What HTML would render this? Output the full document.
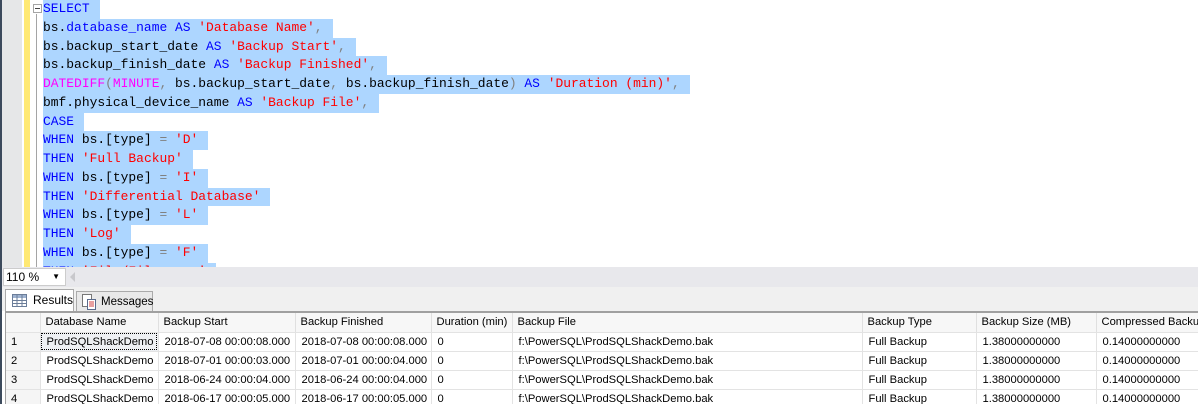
<!DOCTYPE html>
<html><head><style>
*{margin:0;padding:0;box-sizing:border-box}
body{width:1198px;height:404px;overflow:hidden;background:#fff;position:relative;font-family:"Liberation Sans",sans-serif}
#ed{position:absolute;left:0;top:0;width:1198px;height:267px;overflow:hidden;background:#fff}
.lb{position:absolute;left:0;top:0;width:2px;height:404px;background:#3c4a5c}
.gut{position:absolute;left:2px;top:0;width:20px;height:267px;background:#e6e7e8}
.yel{position:absolute;left:24px;top:0;width:6px;height:267px;background:#ffe974}
.vl{position:absolute;left:36px;top:14px;width:1px;height:253px;background:#a5a5a5}
.box{position:absolute;left:33px;top:4px;width:9px;height:9px;border:1px solid #a5a5a5;background:#fff}
.box:after{content:"";position:absolute;left:1px;top:3px;width:5px;height:1px;background:#444}
.ln{position:absolute;left:43px;height:18.75px;line-height:18.75px;font-family:"Liberation Mono",monospace;font-size:12.95px;white-space:pre;color:#000;background:#add6ff;padding-right:10px}
.k{color:#0000ff}.s{color:#ff0000}.f{color:#ff00ff}.g{color:#808080}
#zb{position:absolute;left:2px;top:267px;width:1196px;height:20px;background:#e8e8ec}
#zsel{position:absolute;left:3px;top:268px;width:63px;height:18px;background:#fff;border:1px solid #ccc;font-size:12px;line-height:16px;padding-left:2px}
#tabs{position:absolute;left:2px;top:287px;width:1196px;height:24px;background:#f0f0f0}
.tab{position:absolute;font-size:12px;border:1px solid #aaa;border-bottom:none}
#grid{position:absolute;left:5px;top:311px;width:1193px;height:93px;border-top:2px solid #a0a0a0;border-left:1px solid #a0a0a0;background:#fff;overflow:hidden}
table{border-collapse:collapse;font-size:11.2px;table-layout:fixed;width:1200px}
td{height:19px;border-right:1px solid #e3e3e3;border-bottom:1px solid #e3e3e3;padding:0 0 0 6px;white-space:nowrap;overflow:hidden;line-height:18px}
tr.h td{background:#f7f7f7;border-right:1px solid #e0e0e0;padding-left:5px}
td.n{background:#f5f5f5;padding-left:5px}
td.sel{background:#eef0f3;outline:1px dotted #000;outline-offset:-2px}
</style></head><body>
<div id="ed">
<div class="gut"></div><div class="yel"></div><div class="vl"></div>
<div class="ln" style="top:0px"><span class="k">SELECT</span></div>
<div class="ln" style="top:18.75px">bs.<span class="k">database_name</span> <span class="k">AS</span> <span class="s">'Database Name'</span><span class="g">,</span></div>
<div class="ln" style="top:37.5px">bs.backup_start_date <span class="k">AS</span> <span class="s">'Backup Start'</span><span class="g">,</span></div>
<div class="ln" style="top:56.25px">bs.backup_finish_date <span class="k">AS</span> <span class="s">'Backup Finished'</span><span class="g">,</span></div>
<div class="ln" style="top:75px"><span class="f">DATEDIFF</span><span class="g">(</span><span class="f">MINUTE</span><span class="g">,</span> bs.backup_start_date<span class="g">,</span> bs.backup_finish_date<span class="g">)</span> <span class="k">AS</span> <span class="s">'Duration (min)'</span><span class="g">,</span></div>
<div class="ln" style="top:93.75px">bmf.physical_device_name <span class="k">AS</span> <span class="s">'Backup File'</span><span class="g">,</span></div>
<div class="ln" style="top:112.5px"><span class="k">CASE</span></div>
<div class="ln" style="top:131.25px"><span class="k">WHEN</span> bs.[type] <span class="g">=</span> <span class="s">'D'</span></div>
<div class="ln" style="top:150px"><span class="k">THEN</span> <span class="s">'Full Backup'</span></div>
<div class="ln" style="top:168.75px"><span class="k">WHEN</span> bs.[type] <span class="g">=</span> <span class="s">'I'</span></div>
<div class="ln" style="top:187.5px"><span class="k">THEN</span> <span class="s">'Differential Database'</span></div>
<div class="ln" style="top:206.25px"><span class="k">WHEN</span> bs.[type] <span class="g">=</span> <span class="s">'L'</span></div>
<div class="ln" style="top:225px"><span class="k">THEN</span> <span class="s">'Log'</span></div>
<div class="ln" style="top:243.75px"><span class="k">WHEN</span> bs.[type] <span class="g">=</span> <span class="s">'F'</span></div>
<div class="ln" style="top:262.5px"><span class="k">THEN</span> <span class="s">'File/Filegroup'</span></div>
<div class="box"></div>
</div>
<div id="zb"></div>
<div id="zsel">110 %<span style="position:absolute;right:5px;top:0;font-size:8px">▼</span></div>
<div style="position:absolute;left:70px;top:272px;width:0;height:0;border:5px solid transparent;border-right-color:#c8c8cc;border-left:none"></div>
<div id="tabs"></div>
<div class="tab" style="left:5px;top:289px;width:69px;height:23px;background:#fff;line-height:20px;padding-left:27px">Results
<svg style="position:absolute;left:6px;top:4px" width="15" height="13"><rect x="0.5" y="0.5" width="14" height="12" fill="#fff" stroke="#6b7d99"/><rect x="1" y="1" width="13" height="3" fill="#9fb3d0"/><path d="M5 1v11M10 1v11M1 6.5h13M1 9.5h13" stroke="#6b7d99"/></svg></div>
<div class="tab" style="left:76px;top:291px;width:77px;height:20px;background:#e9e9e9;line-height:20px;padding-left:24px;font-size:11.5px">Messages
<svg style="position:absolute;left:4px;top:1px" width="16" height="17"><rect x="1.5" y="1.5" width="9" height="12" fill="#fff" stroke="#777"/><rect x="6.5" y="6.5" width="8" height="10" fill="#fff" stroke="#5a6b8c"/><path d="M8 9h5M8 11h5M8 13h5" stroke="#d04040"/></svg></div>
<div class="lb"></div>
<div id="grid">
<table>
<colgroup><col style="width:34px"><col style="width:118px"><col style="width:137px"><col style="width:136px"><col style="width:81px"><col style="width:350px"><col style="width:114px"><col style="width:120px"><col style="width:110px"></colgroup>
<tr class="h"><td></td><td>Database Name</td><td>Backup Start</td><td>Backup Finished</td><td>Duration (min)</td><td>Backup File</td><td>Backup Type</td><td>Backup Size (MB)</td><td>Compressed Backup</td></tr>
<tr><td class="n">1</td><td class="sel">ProdSQLShackDemo</td><td>2018-07-08 00:00:08.000</td><td>2018-07-08 00:00:08.000</td><td>0</td><td>f:\PowerSQL\ProdSQLShackDemo.bak</td><td>Full Backup</td><td>1.38000000000</td><td>0.14000000000</td></tr>
<tr><td class="n">2</td><td>ProdSQLShackDemo</td><td>2018-07-01 00:00:03.000</td><td>2018-07-01 00:00:04.000</td><td>0</td><td>f:\PowerSQL\ProdSQLShackDemo.bak</td><td>Full Backup</td><td>1.38000000000</td><td>0.14000000000</td></tr>
<tr><td class="n">3</td><td>ProdSQLShackDemo</td><td>2018-06-24 00:00:04.000</td><td>2018-06-24 00:00:04.000</td><td>0</td><td>f:\PowerSQL\ProdSQLShackDemo.bak</td><td>Full Backup</td><td>1.38000000000</td><td>0.14000000000</td></tr>
<tr><td class="n">4</td><td>ProdSQLShackDemo</td><td>2018-06-17 00:00:05.000</td><td>2018-06-17 00:00:05.000</td><td>0</td><td>f:\PowerSQL\ProdSQLShackDemo.bak</td><td>Full Backup</td><td>1.38000000000</td><td>0.14000000000</td></tr>
</table>
</div>
</body></html>
